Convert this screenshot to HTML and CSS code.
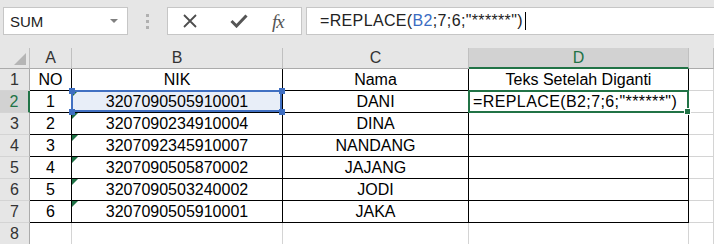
FILE: index.html
```html
<!DOCTYPE html>
<html lang="en">
<head>
    <meta charset="UTF-8">
    <title>REPLACE NIK</title>
    <link rel="stylesheet" href="styles.css">
</head>
<body>
    <!-- Formula bar -->
    <div class="toolbar">
        <div class="name-box">
            <span>SUM</span>
            <span class="drop"></span>
        </div>
        <div class="grip"><i></i><i></i><i></i></div>
        <div class="fx-box">
            <svg class="btn" width="16" height="14" viewBox="0 0 16 14">
                <path d="M2 1 L14 13 M14 1 L2 13" stroke="#4d4d4d" stroke-width="1.8" fill="none"/>
            </svg>
            <svg class="btn" width="18" height="14" viewBox="0 0 18 14">
                <path d="M1.5 7 L6.5 12 L16.5 1.5" stroke="#555" stroke-width="3" fill="none"/>
            </svg>
            <span class="fx">fx</span>
        </div>
        <div class="formula">=REPLACE(<span class="ref">B2</span>;7;6;"******")<span class="caret"></span></div>
    </div>

    <!-- Sheet -->
    <div class="sheet">
        <div class="hd corner"></div>
        <div class="hd">A</div>
        <div class="hd">B</div>
        <div class="hd">C</div>
        <div class="hd hd-sel">D</div>
        <div class="hd"></div>

        <div class="rh">1</div>
        <div class="c">NO</div>
        <div class="c">NIK</div>
        <div class="c">Nama</div>
        <div class="c">Teks Setelah Diganti</div>
        <div class="g"></div>

        <div class="rh rh-sel">2</div>
        <div class="c">1</div>
        <div class="c txt range">3207090505910001<i class="h tl"></i><i class="h tr"></i><i class="h bl"></i><i class="h br"></i></div>
        <div class="c">DANI</div>
        <div class="c active">=REPLACE(B2;7;6;"******")</div>
        <div class="g"></div>

        <div class="rh">3</div>
        <div class="c">2</div>
        <div class="c txt">3207090234910004</div>
        <div class="c">DINA</div>
        <div class="c"></div>
        <div class="g"></div>

        <div class="rh">4</div>
        <div class="c">3</div>
        <div class="c txt">3207092345910007</div>
        <div class="c">NANDANG</div>
        <div class="c"></div>
        <div class="g"></div>

        <div class="rh">5</div>
        <div class="c">4</div>
        <div class="c txt">3207090505870002</div>
        <div class="c">JAJANG</div>
        <div class="c"></div>
        <div class="g"></div>

        <div class="rh">6</div>
        <div class="c">5</div>
        <div class="c txt">3207090503240002</div>
        <div class="c">JODI</div>
        <div class="c"></div>
        <div class="g"></div>

        <div class="rh">7</div>
        <div class="c">6</div>
        <div class="c txt">3207090505910001</div>
        <div class="c">JAKA</div>
        <div class="c"></div>
        <div class="g"></div>

        <div class="rh">8</div>
        <div class="g"></div>
        <div class="g"></div>
        <div class="g"></div>
        <div class="g"></div>
        <div class="g"></div>
    </div>
</body>
</html>
```

FILE: styles.css
```css
body {
    margin: 0;
    width: 714px;
    height: 244px;
    overflow: hidden;
    background: #fff;
    font-family: "Liberation Sans", Arial, sans-serif;
}

/* Formula bar */
.toolbar {
    height: 48px;
    background: #e6e6e6;
    display: flex;
    align-items: flex-start;
    padding-top: 7px;
    box-sizing: border-box;
}

.name-box, .fx-box, .formula {
    height: 28px;
    background: #fff;
    border: 1px solid #c6c6c6;
    box-sizing: border-box;
    display: flex;
    align-items: center;
}

.name-box {
    margin-left: 3px;
    width: 125px;
    padding: 0 0 0 6px;
    font-size: 15px;
    color: #222;
    justify-content: space-between;
}

.drop {
    width: 0;
    height: 0;
    margin-right: 9px;
    border-left: 4px solid transparent;
    border-right: 4px solid transparent;
    border-top: 4px solid #808080;
}

.grip {
    width: 39px;
    height: 28px;
    display: flex;
    flex-direction: column;
    align-items: center;
    justify-content: center;
    gap: 3px;
}

.grip i {
    width: 3px;
    height: 3px;
    background: #b0b0b0;
}

.fx-box {
    width: 135px;
    padding-left: 14px;
    gap: 32px;
}

.fx {
    font-family: "Liberation Serif", serif;
    font-style: italic;
    font-size: 19px;
    color: #555;
    margin-left: -8px;
    margin-top: 2px;
    letter-spacing: -1px;
}

.formula {
    margin-left: 4px;
    flex: 1;
    padding-left: 13px;
    font-size: 16px;
    letter-spacing: 0.35px;
    color: #222;
    border-right: none;
}

.ref {
    color: #3a6cc2;
}

.caret {
    width: 1px;
    height: 18px;
    margin-left: 2px;
    background: #000;
}

/* Sheet */
.sheet {
    display: grid;
    grid-template-columns: 30px 42px 211px 186px 220px 1fr;
    grid-template-rows: 21px repeat(8, 22px);
    font-size: 16px;
}

.sheet > div {
    box-sizing: border-box;
    display: flex;
    align-items: center;
    justify-content: center;
    position: relative;
}

.hd {
    background: #e6e6e6;
    color: #333;
    border-right: 1px solid #c0c0c0;
    border-bottom: 1px solid #ababab;
}

.hd-sel {
    background: #d2d2d2;
    color: #217346;
    border-bottom: 2px solid #217346;
}

.corner::after {
    content: "";
    position: absolute;
    right: 3px;
    bottom: 3px;
    border-left: 12px solid transparent;
    border-bottom: 12px solid #b5b5b5;
}

.rh {
    background: #e6e6e6;
    color: #333;
    border-right: 1px solid #ababab;
    border-bottom: 1px solid #d4d4d4;
}

.rh-sel {
    background: #d2d2d2;
    color: #217346;
    border-right: 2px solid #217346;
}

.c {
    color: #000;
    border-right: 1px solid #000;
    border-bottom: 1px solid #000;
}

.g {
    border-right: 1px solid #d4d4d4;
    border-bottom: 1px solid #d4d4d4;
}

/* number stored as text marker */
.txt::before {
    content: "";
    position: absolute;
    left: 0;
    top: 0;
    border-top: 6px solid #1e7145;
    border-right: 6px solid transparent;
}

/* referenced range B2 */
.range {
    background: #e8eef8;
}

.range::after {
    content: "";
    position: absolute;
    left: -1px;
    top: -1px;
    right: 0;
    bottom: 0;
    border: 2px solid #4170c2;
}

.h {
    position: absolute;
    width: 6px;
    height: 6px;
    background: #3e6ec1;
    z-index: 2;
}

.tl { left: -3px; top: -3px; }
.tr { right: -3px; top: -3px; }
.bl { left: -3px; bottom: -3px; }
.br { right: -3px; bottom: -3px; }

/* active cell D2 */
.sheet > .active {
    justify-content: flex-start;
    padding-left: 4px;
    letter-spacing: 0.4px;
    white-space: nowrap;
}

.active::after {
    content: "";
    position: absolute;
    left: -1px;
    top: -1px;
    right: -1px;
    bottom: -1px;
    border: 2px solid #217346;
}

.active::before {
    content: "";
    position: absolute;
    right: -3px;
    bottom: -3px;
    width: 5px;
    height: 5px;
    background: #217346;
    border: 1px solid #fff;
    z-index: 2;
}
```
